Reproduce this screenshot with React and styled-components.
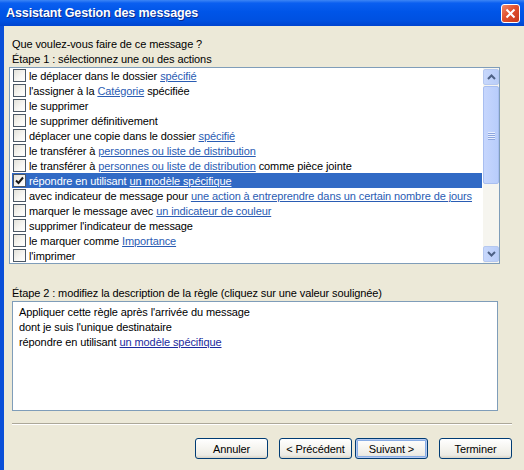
import React from "react";
import styled, { createGlobalStyle } from "styled-components";

const GlobalStyle = createGlobalStyle`
  html, body {
    margin: 0;
    padding: 0;
    background: #ece9d8;
  }
  * { box-sizing: border-box; }
`;

const Window = styled.div`
  width: 524px;
  height: 470px;
  display: flex;
  flex-direction: column;
  font-family: "Liberation Sans", Arial, sans-serif;
  font-size: 11px;
  letter-spacing: -0.1px;
  color: #000;
  overflow: hidden;
`;

const TitleBar = styled.div`
  height: 26px;
  flex: none;
  display: flex;
  align-items: center;
  justify-content: space-between;
  padding: 0 4px 0 6px;
  background: linear-gradient(to bottom, #3d86f5 0%, #0a5ff0 12%, #0055e8 45%, #0050e0 80%, #0044cf 100%);
`;

const TitleText = styled.span`
  color: #fff;
  font-family: "Liberation Sans", Arial, sans-serif;
  font-weight: bold;
  font-size: 12.5px;
  letter-spacing: -0.1px;
  text-shadow: 1px 1px #0a2a8a;
`;

const CloseButton = styled.div`
  width: 19px;
  height: 19px;
  border: 1px solid #fff;
  border-radius: 3px;
  background: linear-gradient(135deg, #f08a6a 0%, #e1502d 45%, #c8381a 100%);
  display: flex;
  align-items: center;
  justify-content: center;
`;

const Body = styled.div`
  flex: 1;
  display: flex;
  flex-direction: column;
  border-left: 4px solid #0a4fd8;
  padding: 11px 12px 0 8px;
`;

const Label = styled.div`
  line-height: 15px;
  height: 15px;
  white-space: nowrap;
`;

const ListBox = styled.div`
  margin-left: -3px;
  width: 491px;
  height: 197px;
  border: 1px solid #7f9db9;
  background: #fff;
  display: flex;
`;

const Rows = styled.div`
  flex: 1;
  padding: 0 1px 0 2px;
  overflow: hidden;
`;

const Row = styled.div`
  height: 15px;
  display: flex;
  align-items: center;
  gap: 3px;
  padding-left: 1px;
  white-space: nowrap;
  background: ${({ selected }) => (selected ? "#316ac5" : "transparent")};
  color: ${({ selected }) => (selected ? "#fff" : "#000")};
`;

const Check = styled.span`
  width: 13px;
  height: 13px;
  flex: none;
  border: 1px solid #4b5866;
  background: linear-gradient(135deg, #e4e2da 0%, #f8f7f3 60%, #fff 100%);
  display: flex;
  align-items: center;
  justify-content: center;
`;

const Link = styled.span`
  text-decoration: underline;
  color: ${({ selected, dark }) => (selected ? "#fff" : dark ? "#1b2a9e" : "#2a5cb3")};
`;

const ScrollBar = styled.div`
  width: 16px;
  flex: none;
  display: flex;
  flex-direction: column;
  background: #f6f5ef;
  padding: 1px 0;
`;

const ScrollButton = styled.div`
  height: 16px;
  flex: none;
  border: 1px solid #b5c8f0;
  border-radius: 2px;
  background: linear-gradient(to right, #c8d8fc, #b9cdf8);
  display: flex;
  align-items: center;
  justify-content: center;
`;

const Thumb = styled.div`
  height: 98px;
  flex: none;
  margin-top: 1px;
  border: 1px solid #a8bef0;
  border-radius: 2px;
  background: linear-gradient(to right, #c6d6fd, #b8cdfb);
  display: flex;
  flex-direction: column;
  align-items: center;
  justify-content: center;
  gap: 1px;
`;

const Grip = styled.span`
  width: 7px;
  height: 1px;
  background: #e8effe;
  box-shadow: 0 1px 0 #8ca5de;
`;

const Track = styled.div`
  flex: 1;
`;

const StepLabel = styled(Label)`
  margin-top: 22px;
`;

const DescBox = styled.div`
  width: 486px;
  height: 110px;
  border: 1px solid #7f9db9;
  background: #fff;
  padding: 3px 6px;
`;

const DescLine = styled.div`
  line-height: 15px;
  height: 15px;
  white-space: nowrap;
`;

const Separator = styled.div`
  margin-top: 12px;
  height: 2px;
  border-top: 1px solid #aca899;
  border-bottom: 1px solid #fff;
`;

const ButtonRow = styled.div`
  margin-top: 13px;
  display: flex;
  justify-content: flex-end;
`;

const Button = styled.div`
  width: 73px;
  height: 21px;
  margin-left: ${({ tight }) => (tight ? "3px" : "11px")};
  border: 1px solid #003c74;
  border-radius: 3px;
  background: linear-gradient(to bottom, #ffffff 0%, #f5f4ef 50%, #ecebe4 85%, #d8d3c6 100%);
  box-shadow: ${({ focused }) =>
    focused ? "inset 0 0 0 1px #b6cbf2, inset 0 0 0 2px #89ade4" : "none"};
  display: flex;
  align-items: center;
  justify-content: center;
  white-space: nowrap;
`;

const actions = [
  ["le déplacer dans le dossier ", "spécifié"],
  ["l'assigner à la ", "Catégorie", " spécifiée"],
  ["le supprimer"],
  ["le supprimer définitivement"],
  ["déplacer une copie dans le dossier ", "spécifié"],
  ["le transférer à ", "personnes ou liste de distribution"],
  ["le transférer à ", "personnes ou liste de distribution", " comme pièce jointe"],
  ["répondre en utilisant ", "un modèle spécifique"],
  ["avec indicateur de message pour ", "une action à entreprendre dans un certain nombre de jours"],
  ["marquer le message avec ", "un indicateur de couleur"],
  ["supprimer l'indicateur de message"],
  ["le marquer comme ", "Importance"],
  ["l'imprimer"],
];

function Chevron({ up }) {
  return (
    <svg width="9" height="6" viewBox="0 0 9 6">
      <path
        d={up ? "M1 5 L4.5 1.5 L8 5" : "M1 1 L4.5 4.5 L8 1"}
        fill="none"
        stroke="#4d6185"
        strokeWidth="2"
      />
    </svg>
  );
}

function CheckMark() {
  return (
    <svg width="9" height="9" viewBox="0 0 9 9">
      <path d="M1 4.5 L3.5 7 L8 1.5" fill="none" stroke="#1a1a1a" strokeWidth="2" />
    </svg>
  );
}

export default function App() {
  const selectedIndex = 7;
  return (
    <>
      <GlobalStyle />
      <Window>
        <TitleBar>
          <TitleText>Assistant Gestion des messages</TitleText>
          <CloseButton>
            <svg width="11" height="11" viewBox="0 0 11 11">
              <path d="M1.5 1.5 L9.5 9.5 M9.5 1.5 L1.5 9.5" stroke="#fff" strokeWidth="2" />
            </svg>
          </CloseButton>
        </TitleBar>
        <Body>
          <Label>Que voulez-vous faire de ce message ?</Label>
          <Label>Étape 1 : sélectionnez une ou des actions</Label>
          <ListBox>
            <Rows>
              {actions.map((parts, i) => {
                const selected = i === selectedIndex;
                return (
                  <Row key={i} selected={selected}>
                    <Check>{selected && <CheckMark />}</Check>
                    <span>
                      {parts.map((p, j) =>
                        j === 1 ? (
                          <Link key={j} selected={selected}>{p}</Link>
                        ) : (
                          <span key={j}>{p}</span>
                        )
                      )}
                    </span>
                  </Row>
                );
              })}
            </Rows>
            <ScrollBar>
              <ScrollButton><Chevron up /></ScrollButton>
              <Thumb>
                <Grip /><Grip /><Grip /><Grip />
              </Thumb>
              <Track />
              <ScrollButton><Chevron /></ScrollButton>
            </ScrollBar>
          </ListBox>
          <StepLabel>Étape 2 : modifiez la description de la règle (cliquez sur une valeur soulignée)</StepLabel>
          <DescBox>
            <DescLine>Appliquer cette règle après l'arrivée du message</DescLine>
            <DescLine>dont je suis l'unique destinataire</DescLine>
            <DescLine>
              répondre en utilisant <Link dark>un modèle spécifique</Link>
            </DescLine>
          </DescBox>
          <Separator />
          <ButtonRow>
            <Button>Annuler</Button>
            <Button>&lt; Précédent</Button>
            <Button tight focused>Suivant &gt;</Button>
            <Button>Terminer</Button>
          </ButtonRow>
        </Body>
      </Window>
    </>
  );
}
